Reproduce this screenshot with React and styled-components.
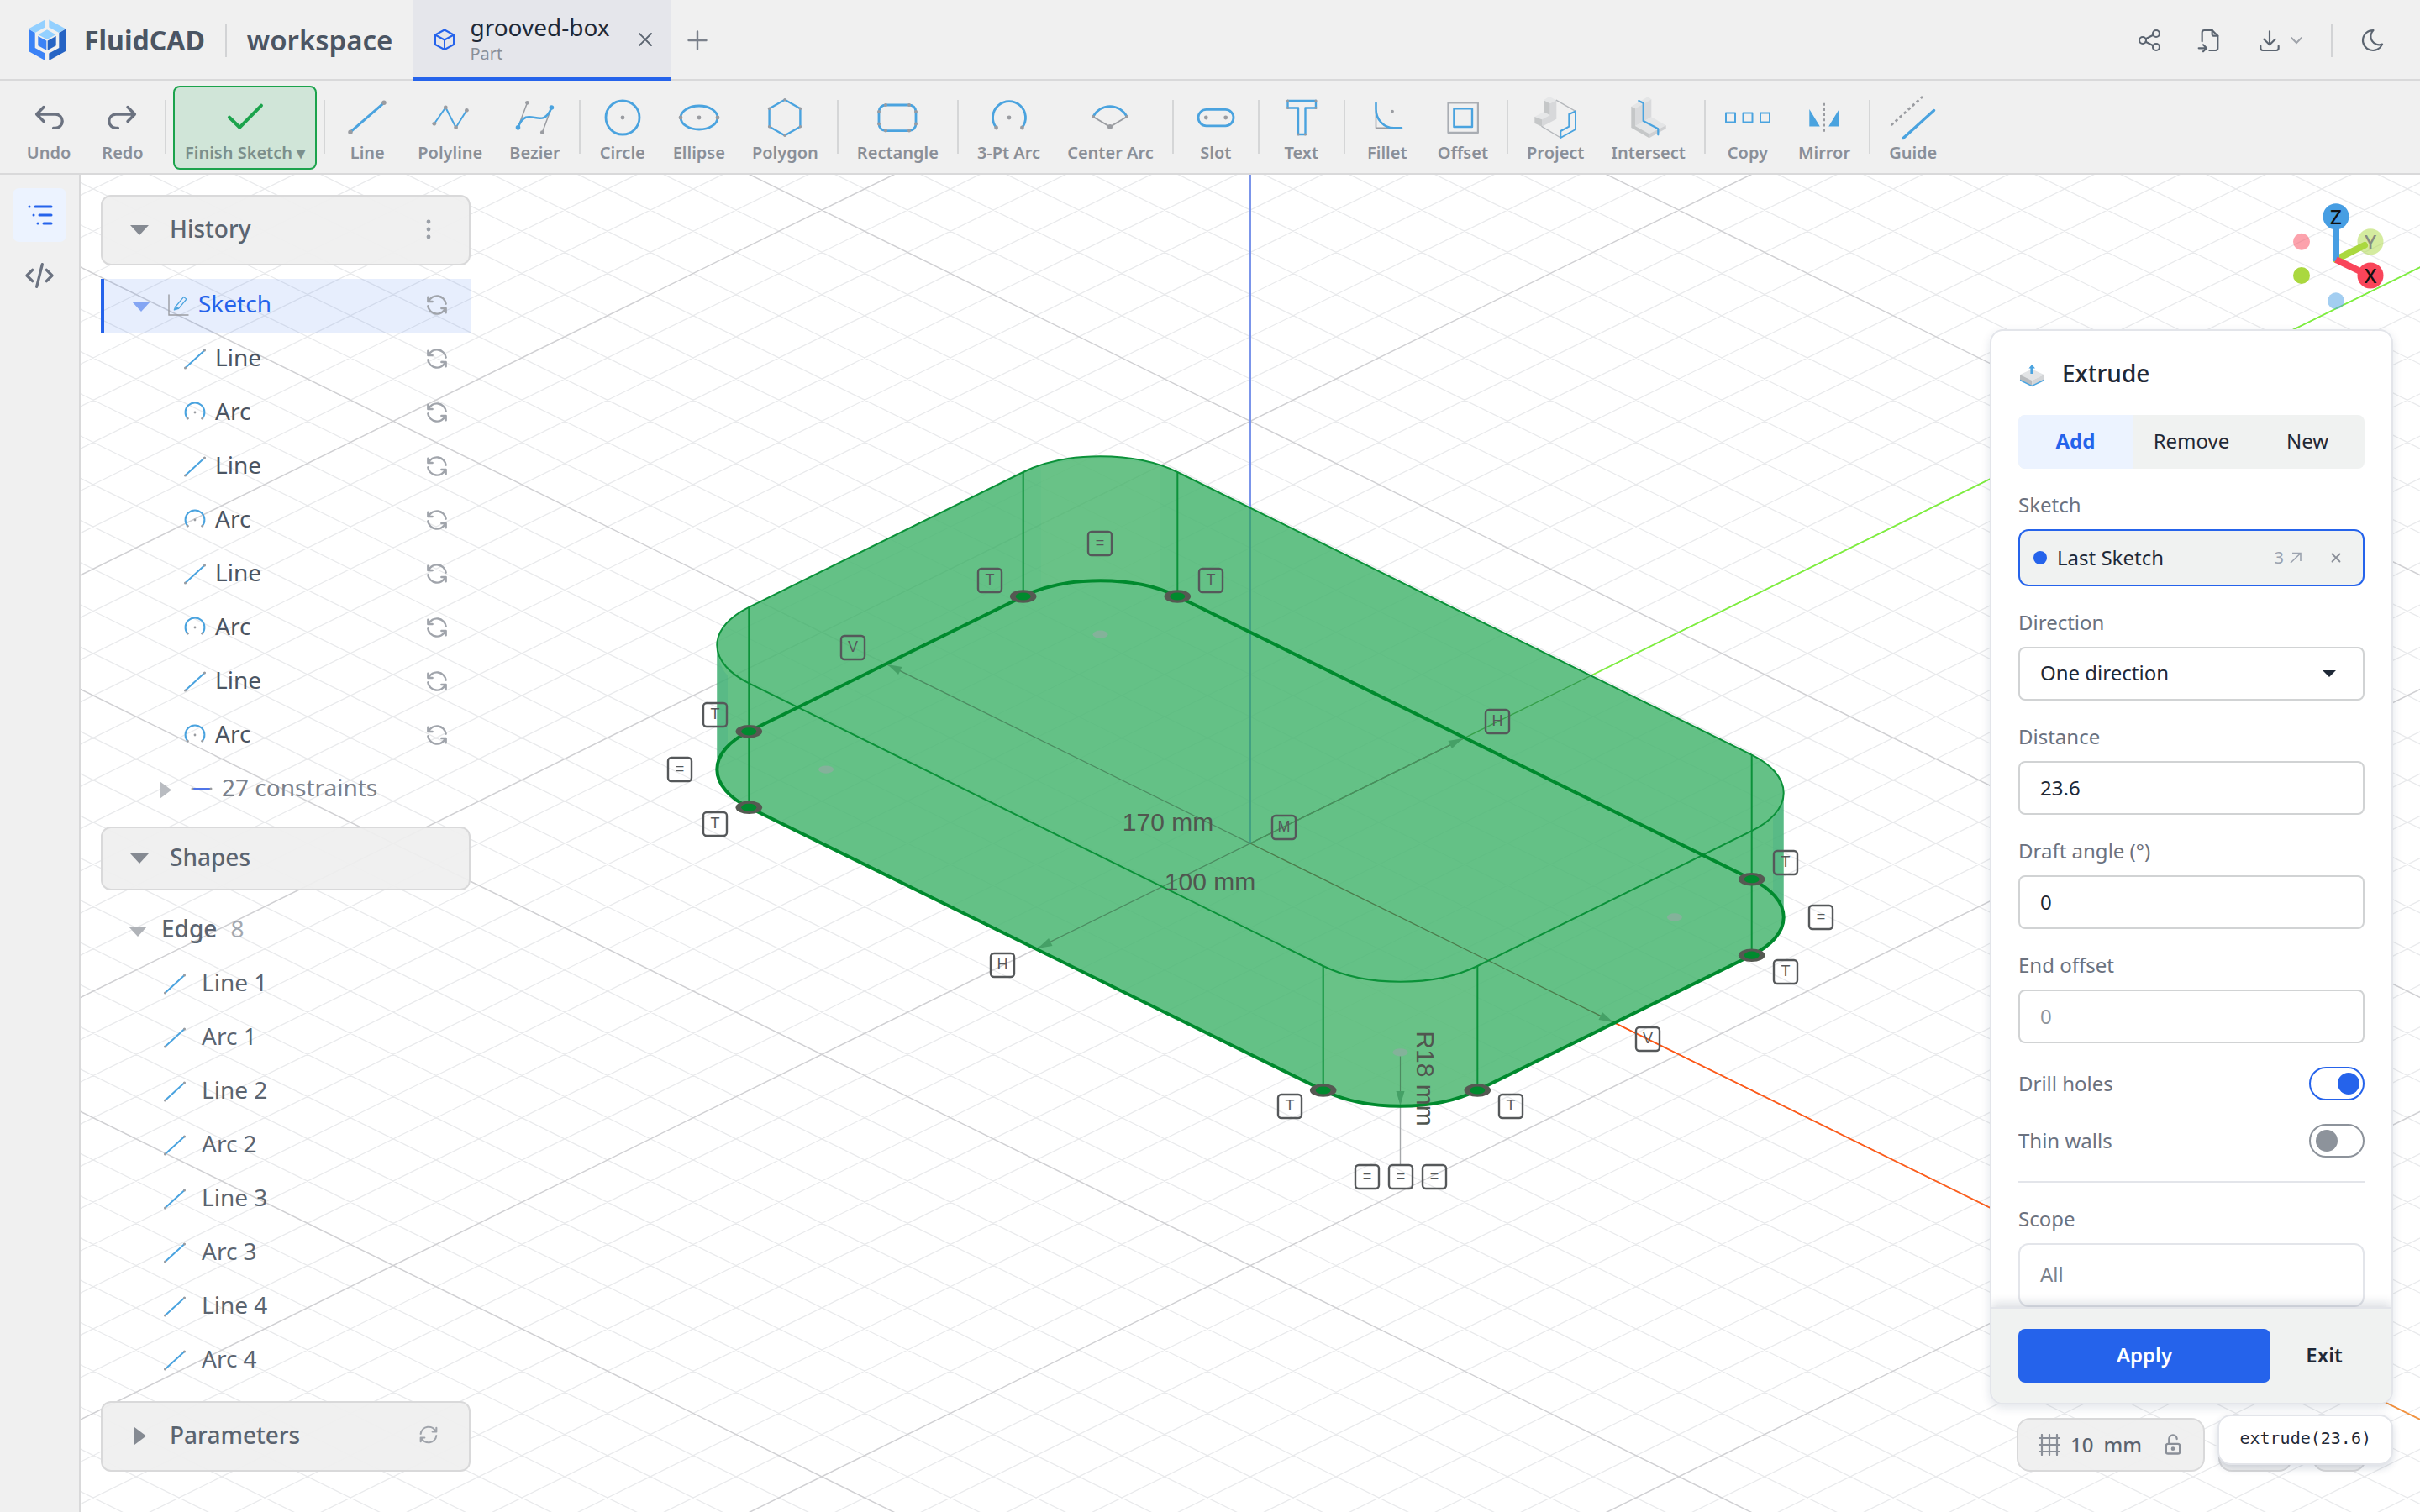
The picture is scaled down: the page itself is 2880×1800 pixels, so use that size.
import React from "react";
import styled, { createGlobalStyle, css } from "styled-components";

const GlobalStyle = createGlobalStyle`
  *, *::before, *::after { box-sizing: border-box; }
  html, body, #root { height: 100%; margin: 0; }
  body { background: #fff; }
  body, button, input, select { font-family: "Noto Sans", sans-serif; }
  button { border: 0; margin: 0; padding: 0; background: none; color: inherit; cursor: pointer; }
  ul { list-style: none; margin: 0; padding: 0; }
  svg { display: block; flex: none; }
`;

const blue = "#2563eb";
const sky = "#4aa3df";
const grey = "#9a9ca1";
const bar = "#f0f0f0";
const line = "#d9d9da";

const Shell = styled.div`
  display: flex;
  flex-direction: column;
  height: 100vh;
  overflow: hidden;
`;

/* ---------- header ---------- */

const Header = styled.header`
  display: flex;
  align-items: center;
  height: 96px;
  flex: none;
  padding: 0 28px 0 32px;
  background: ${bar};
  box-shadow: inset 0 -2px 0 ${line};
`;

const Brand = styled.div`
  display: flex;
  align-items: center;
  gap: 20px;
  color: #4b5563;
  font-size: 32px;
  line-height: 48px;
  font-weight: 700;
`;

const Workspace = styled.div`
  padding-right: 24px;
  color: #4b5563;
  font-size: 33px;
  line-height: 48px;
  font-weight: 600;
`;

const Divider = styled.span`
  width: 2px;
  height: 40px;
  margin: 0 ${(p) => p.$gap}px;
  background: #d2d3d5;
`;

const Tab = styled.div`
  display: flex;
  align-items: center;
  gap: 16px;
  align-self: stretch;
  padding: 0 12px 2px 24px;
  background: #e5e6eb;
  box-shadow: inset 0 -4px 0 ${blue};
`;

const TabText = styled.div`
  display: flex;
  flex-direction: column;
  gap: 2px;
`;

const TabTitle = styled.span`
  color: #1f2937;
  font-size: 28px;
  line-height: 32px;
`;

const TabKind = styled.span`
  color: #8a8f98;
  font-size: 20px;
  line-height: 28px;
`;

const IconButton = styled.button`
  display: flex;
  align-items: center;
  justify-content: center;
  gap: 6px;
  width: ${(p) => p.$w || 56}px;
  height: ${(p) => p.$h || 56}px;
  margin-left: ${(p) => p.$ml || 0}px;
  border-radius: 8px;
  color: ${(p) => p.$color || "#5b6470"};
`;

const HeaderActions = styled.div`
  display: flex;
  align-items: center;
  gap: 16px;
  margin-left: auto;
`;

/* ---------- toolbar ---------- */

const Toolbar = styled.nav`
  display: flex;
  align-items: center;
  gap: 4px;
  flex: none;
  height: 112px;
  padding: 0 16px 2px;
  background: ${bar};
  box-shadow: inset 0 -2px 0 ${line};
`;

const Tool = styled.button`
  display: flex;
  flex-direction: column;
  align-items: center;
  min-width: 84px;
  margin-top: 2px;
  padding: 8px 12px 4px;
  border: 2px solid transparent;
  border-radius: 8px;
  color: #8a8f98;
  font-size: 20px;
  line-height: 28px;
  font-weight: 600;
  white-space: nowrap;
  ${(p) =>
    p.$active &&
    css`
      color: #7b8f8c;
      background: #d0e5d8;
      border-color: #1ba34c;
    `}
`;

const ToolSep = styled.span`
  width: 2px;
  height: 64px;
  margin: 0 4px;
  background: #d5d6d7;
`;

/* ---------- body ---------- */

const Body = styled.div`
  display: flex;
  flex: 1;
  min-height: 0;
`;

const Rail = styled.aside`
  display: flex;
  flex-direction: column;
  align-items: center;
  gap: 8px;
  width: 96px;
  padding-top: 16px;
  background: ${bar};
  border-right: 2px solid ${line};
`;

const RailButton = styled.button`
  display: flex;
  align-items: center;
  justify-content: center;
  width: 64px;
  height: 64px;
  border-radius: 8px;
  color: ${(p) => (p.$active ? blue : "#6b7280")};
  background: ${(p) => (p.$active ? "#ecf3ff" : "transparent")};
`;

const Stage = styled.main`
  position: relative;
  display: flex;
  justify-content: space-between;
  flex: 1;
  min-width: 0;
  padding: 24px 32px 48px 24px;
`;

const Canvas = styled.svg`
  position: absolute;
  inset: 0;
  width: 100%;
  height: 100%;
`;

const Sidebar = styled.section`
  position: relative;
  display: flex;
  flex-direction: column;
  gap: 16px;
  width: 440px;
`;

const Group = styled.div`
  display: flex;
  flex-direction: column;
  gap: 16px;
  margin-bottom: ${(p) => (p.$tight ? -4 : 0)}px;
`;

const GroupHead = styled.div`
  display: flex;
  align-items: center;
  height: ${(p) => (p.$small ? 76 : 84)}px;
  padding: 0 34px 4px 32px;
  border: 2px solid ${line};
  border-radius: 12px;
  background: rgba(239, 239, 239, 0.92);
`;

const GroupToggle = styled.button`
  display: flex;
  align-items: center;
  gap: 24px;
  flex: 1;
  color: #5b6470;
  font-size: 28px;
  line-height: 40px;
  font-weight: 500;

  > svg { color: #858a92; }
`;

const Row = styled.li`
  display: flex;
  align-items: center;
  gap: ${(p) => p.$gap || 8}px;
  height: 64px;
  padding: 0 24px 2px ${(p) => p.$indent}px;
  border-left: 4px solid ${(p) => (p.$active ? blue : "transparent")};
  background: ${(p) => (p.$active ? "rgba(37, 99, 235, 0.11)" : "none")};
  color: ${(p) => (p.$active ? blue : p.$color || "#4b5563")};
  font-size: 28px;
  line-height: 40px;
  font-weight: ${(p) => (p.$strong ? 500 : 400)};
`;

const RowLabel = styled.span`
  flex: 1;
  padding-bottom: 4px;
`;

const Count = styled.span`
  margin-left: 16px;
  color: #a3a8b0;
  font-weight: 400;
`;

const CaretButton = styled.button`
  display: flex;
  margin-right: 8px;
  color: ${(p) => p.$color};
`;

const RefreshButton = styled.button`
  display: flex;
  color: #a0a4ab;
`;

/* ---------- right column ---------- */

const Column = styled.section`
  position: relative;
  display: flex;
  flex-direction: column;
  width: 480px;
`;

const Gizmo = styled.svg`
  align-self: flex-end;
  width: 160px;
  height: 160px;
  font-family: "Noto Sans", sans-serif;
`;

const Panel = styled.form`
  display: flex;
  flex-direction: column;
  flex: 1;
  min-height: 0;
  margin: 0 0 16px;
  overflow: hidden;
  border: 2px solid #e3e5ea;
  border-radius: 16px;
  background: #fff;
  box-shadow: 0 4px 12px rgba(15, 40, 80, 0.12);
`;

const PanelBody = styled.div`
  display: flex;
  flex-direction: column;
  gap: 28px;
  flex: 1;
  min-height: 0;
  overflow: hidden;
  padding: 28px 32px 0;
  color: #1f2937;
  font-size: 24px;
  line-height: 32px;
`;

const PanelTitle = styled.h2`
  display: flex;
  align-items: center;
  gap: 16px;
  flex: none;
  margin: 0;
  font-size: 28px;
  line-height: 44px;
  font-weight: 500;
`;

const Segments = styled.div`
  display: grid;
  grid-template-columns: repeat(3, 1fr);
  gap: 2px;
  flex: none;
  height: 64px;
  overflow: hidden;
  border-radius: 8px;
  background: #f0f2f1;
`;

const Segment = styled.button`
  padding-bottom: 2px;
  color: ${(p) => (p.$active ? blue : "#1f2937")};
  background: ${(p) => (p.$active ? "#ecf3ff" : "none")};
  font-size: 24px;
  line-height: 32px;
  font-weight: ${(p) => (p.$active ? 700 : 400)};
`;

const Field = styled.div`
  display: flex;
  flex-direction: column;
  gap: 13px;
  flex: none;
`;

const Label = styled.label`
  margin-top: -1px;
  color: #6b7280;
`;

const box = css`
  width: 100%;
  height: 64px;
  padding: 0 24px 2px;
  border: 2px solid #d1d3d4;
  border-radius: 8px;
  background: #fff;
  color: #1f2937;
  font-size: 24px;
  line-height: 32px;
  outline: none;
`;

const TextInput = styled.input`
  ${box}
  &::placeholder { color: #8f959e; }
`;

const SelectWrap = styled.div`
  display: grid;
  align-items: center;
  > * { grid-area: 1 / 1; }
  > svg { justify-self: end; margin-right: 34px; pointer-events: none; }
`;

const Select = styled.select`
  ${box}
  appearance: none;
`;

const Chip = styled.div`
  display: flex;
  align-items: center;
  height: 68px;
  padding: 0 16px;
  border: 2px solid ${blue};
  border-radius: 12px;
  background: #f0f2f1;
`;

const ChipDot = styled.span`
  width: 16px;
  height: 16px;
  margin-right: 12px;
  border-radius: 50%;
  background: ${blue};
`;

const ChipRef = styled.button`
  display: flex;
  align-items: center;
  gap: 6px;
  margin-left: auto;
  color: #9ca3af;
  font-size: 20px;
  line-height: 28px;
`;

const ToggleRow = styled.div`
  display: flex;
  align-items: center;
  justify-content: space-between;
  flex: none;
  height: 40px;
`;

const Switch = styled.input`
  appearance: none;
  display: flex;
  align-items: center;
  width: 66px;
  height: 40px;
  margin: 0;
  padding: 0 4px 0 6px;
  border: 2px solid #8d939b;
  border-radius: 20px;
  background: #fff;
  &::before {
    content: "";
    width: 26px;
    height: 26px;
    border-radius: 50%;
    background: #8d939b;
  }
  &:checked { justify-content: flex-end; border-color: ${blue}; }
  &:checked::before { background: ${blue}; }
`;

const Rule = styled.hr`
  flex: none;
  width: 100%;
  height: 2px;
  margin: 0;
  border: 0;
  background: #e3e5ea;
`;

const ScopeButton = styled.button`
  ${box}
  height: 76px;
  border-color: #e3e5ea;
  border-radius: 12px;
  color: #7b818b;
  text-align: left;
`;

const PanelFooter = styled.div`
  display: flex;
  gap: 16px;
  flex: none;
  padding: 24px 32px;
  border-top: 2px solid #e3e5ea;
  background: #f0f2f1;
  box-shadow: 0 -4px 12px rgba(15, 30, 60, 0.16);
`;

const Action = styled.button`
  flex: ${(p) => (p.$primary ? "1" : "0 0 96px")};
  height: 64px;
  padding-bottom: 2px;
  border-radius: 8px;
  background: ${(p) => (p.$primary ? blue : "none")};
  color: ${(p) => (p.$primary ? "#fff" : "#1f2937")};
  font-size: 24px;
  line-height: 32px;
  font-weight: 600;
`;

const Dock = styled.div`
  position: relative;
  display: flex;
  gap: 16px;
  flex: none;
  padding: 0 32px;
`;

const DockItem = styled.button`
  display: flex;
  align-items: center;
  gap: 12px;
  flex: ${(p) => (p.$w ? `0 0 ${p.$w}px` : "1")};
  height: 64px;
  margin-left: ${(p) => (p.$last ? 8 : 0)}px;
  padding: 0 22px 0 24px;
  border: 2px solid ${line};
  border-radius: 16px;
  background: rgba(239, 239, 239, 0.92);
  color: #5b6470;
  font-size: 24px;
  line-height: 32px;
  font-weight: 500;
`;

const DockEnd = styled.span`
  display: flex;
  margin-left: auto;
  color: #8a8f98;
`;

const Popover = styled.output`
  position: absolute;
  top: -4px;
  right: 0;
  padding: 12px 24px 16px;
  border: 2px solid #e3e5ea;
  border-radius: 16px;
  background: #fff;
  box-shadow: 0 4px 10px rgba(15, 40, 80, 0.16);
  color: #1f2937;
  font-family: "DejaVu Sans Mono", monospace;
  font-size: 20px;
  line-height: 28px;
`;

/* ---------- outline icons ---------- */

function Outline({ size, weight = 1.6, flip, children }) {
  return (
    <svg width={size} height={size} viewBox="0 0 24 24" fill="none" stroke="currentColor" strokeWidth={weight} strokeLinecap="round" strokeLinejoin="round" aria-hidden="true">
      <g transform={flip ? "matrix(-1 0 0 1 24 0)" : undefined}>{children}</g>
    </svg>
  );
}

const Refresh = ({ size = 32, flip }) => (
  <Outline size={size} flip={flip} weight={1.8}>
    <path d="M20 11a8.1 8.1 0 0 0 -15.5 -2m-.5 -4v4h4" />
    <path d="M4 13a8.1 8.1 0 0 0 15.5 2m.5 4v-4h-4" />
  </Outline>
);

const Cross = ({ size, weight }) => (
  <Outline size={size} weight={weight}>
    <path d="M18 6l-12 12M6 6l12 12" />
  </Outline>
);

const Caret = ({ open }) => (
  <svg width="24" height="24" viewBox="0 0 24 24" fill="currentColor" aria-hidden="true">
    <path d={open ? "M1 8H23L12 20Z" : "M6 3V24L20 13.5Z"} />
  </svg>
);

const Logo = () => (
  <svg width="48" height="52" viewBox="0 0 48 52" aria-hidden="true">
    <path fill="#93d0ff" d="M21.7 1.5V10.5L9.7 17L2 12.3ZM26.3 1.5V10.5L38.3 17L46 12.3ZM24 13.3L34.5 19.2L24 25L13.5 19.2Z" />
    <path fill="#3b82f6" d="M2 12.6L9.7 17.3V35L21.7 41.6V50L2 39Z" />
    <path fill="#2563c4" d="M46 12.6L38.3 17.3V35L26.3 41.6V50L46 39Z" />
    <path fill="#3b82f6" d="M13.3 21L23.3 26.6V37.8L13.3 32.3Z" />
    <path fill="#2563c4" d="M34.7 21L24.7 26.6V37.8L34.7 32.3Z" />
  </svg>
);

/* ---------- toolbar glyphs, on a 56 unit square ---------- */

const Dots = ({ at, r = 2.4, fill = grey }) => at.map(([x, y]) => <circle key={`${x},${y}`} cx={x} cy={y} r={r} fill={fill} stroke="none" />);

const glyphs = {
  undo: (
    <g stroke="#6b7280" strokeWidth="3.4">
      <path d="M22 15.5L13.6 24L22 32.5M14 24H36a8.2 8.2 0 0 1 0 16.4H33.6" />
    </g>
  ),
  redo: (
    <g stroke="#6b7280" strokeWidth="3.4">
      <path d="M34 15.5L42.4 24L34 32.5M42 24H20a8.2 8.2 0 0 0 0 16.4H22.4" />
    </g>
  ),
  check: <path stroke="#1ba34c" strokeWidth="4" d="M9 27.7L21.3 39.7L47 13.7" />,
  line: (
    <>
      <path strokeWidth="3" d="M8 45.2L48 10.3" />
      <Dots at={[[8, 45.2], [48, 10.3]]} r={2.7} />
    </>
  ),
  polyline: (
    <>
      <path strokeWidth="2" d="M8.8 35.3L22.3 16L34.6 39.7L47.4 19.3" />
      <Dots at={[[8.8, 35.3], [22.3, 16], [34.6, 39.7], [47.4, 19.3]]} />
    </>
  ),
  bezier: (
    <>
      <path stroke={grey} strokeWidth="1.5" d="M7.5 39.7L18.5 10.3M47.4 16L36.3 45.7" />
      <path strokeWidth="2.6" d="M7.5 39.7C18.5 10.3 36.3 45.7 47.4 16" />
      <Dots at={[[18.5, 10.3], [36.3, 45.7]]} />
      <Dots at={[[7.5, 39.7], [47.4, 16]]} fill={sky} r={2.8} />
    </>
  ),
  circle: (
    <>
      <circle cx="28" cy="28" r="20" strokeWidth="2.8" />
      <Dots at={[[28, 28]]} />
    </>
  ),
  ellipse: (
    <>
      <ellipse cx="28" cy="28" rx="22" ry="14" strokeWidth="2.8" />
      <Dots at={[[28, 28], [6, 28], [50, 28]]} />
    </>
  ),
  polygon: (
    <>
      <path strokeWidth="2.4" d="M28 6.8L46.4 17.2V38.8L28 49.2L9.6 38.8V17.2Z" />
      <Dots at={[[28, 6.8], [46.4, 17.2], [46.4, 38.8], [28, 49.2], [9.6, 38.8], [9.6, 17.2]]} r={1.7} />
    </>
  ),
  rectangle: (
    <>
      <rect x="6" y="13" width="44" height="30.6" rx="8" strokeWidth="2.8" />
      <Dots r={2} at={[[14, 13], [42, 13], [6, 21], [50, 21], [6, 35.6], [50, 35.6], [14, 43.6], [42, 43.6]]} />
    </>
  ),
  arc: (
    <>
      <path strokeWidth="2.8" d="M12.6 40A19.5 19.5 0 1 1 43.4 40" />
      <Dots at={[[28, 28], [12.6, 40], [43.4, 40]]} />
    </>
  ),
  centerArc: (
    <>
      <path stroke={grey} strokeWidth="2" d="M8 27L28 39L48 27" />
      <path strokeWidth="2.8" d="M8 27A22.3 22.3 0 0 1 48 27" />
      <Dots at={[[8, 27], [48, 27]]} r={2} />
      <Dots at={[[28, 39]]} r={3} />
    </>
  ),
  slot: (
    <>
      <rect x="7" y="18.4" width="42" height="19.4" rx="9.7" strokeWidth="2.8" />
      <Dots at={[[16.3, 28], [39.7, 28]]} />
    </>
  ),
  text: (
    <>
      <path strokeWidth="2.4" d="M11.5 8H45V16.5H32.5V48H24V16.5H11.5Z" />
      <Dots r={1.6} at={[[11.5, 8], [45, 8], [45, 16.5], [11.5, 16.5], [24, 48], [32.5, 48]]} />
    </>
  ),
  fillet: (
    <>
      <path stroke={grey} strokeWidth="1.6" d="M14.5 20V40.3H34" />
      <path strokeWidth="2.6" d="M14.5 10.5V18C14.5 30.5 24 40.3 36 40.3H45" />
      <Dots at={[[34, 20.6]]} r={1.9} />
    </>
  ),
  offset: (
    <>
      <rect x="10.5" y="10.5" width="35.4" height="35.4" stroke="#a9adb3" strokeWidth="2.2" />
      <rect x="17.4" y="17.4" width="21.6" height="21.6" strokeWidth="2.4" />
    </>
  ),
  project: (
    <>
      <g stroke="none">
        <path fill="#e6e7e8" d="M14 7.3L20.7 3L29.3 7.3L21.7 11.3ZM3.3 27L14 21.3L21.7 25L12 30.3Z" />
        <path fill="#c5c7c8" d="M14 7.3L21.7 11.3V25L14 21.3ZM3.3 27L12 30.3V38.7L3.3 34.7Z" />
        <path fill="#d7d8da" d="M21.7 11.3L29.3 7.3V29.7L12 38.7V30.3L21.7 25Z" />
      </g>
      <path stroke="#b5b8bc" strokeWidth="1.4" d="M29.3 7.3L52 20.3M12 38.7L34.3 52" />
      <path strokeWidth="2" d="M52 20.3V42L34.3 52V44L44.3 38.7V24Z" />
    </>
  ),
  intersect: (
    <>
      <g stroke="none">
        <path fill="#e4e5e6" d="M7.3 14.7L27 3.3L31.3 6.3L12 17.3ZM12 38L31.3 27.3L48.7 37.3L28.7 47.3Z" />
        <path fill="#c5c7c8" d="M7.3 14.7L12 17.3V38L28.7 47.3V52.3L7.3 40Z" />
        <path fill="#d9dadc" d="M12 17.3L31.3 6.3V27.3L12 38Z" />
        <path fill="#cfd0d2" d="M28.7 47.3L48.7 37.3V41L28.7 52.3Z" />
      </g>
      <path strokeWidth="2.2" d="M16.3 8L21.7 10.7V32L39.3 41.3V48.3" />
    </>
  ),
  copy: (
    <g strokeWidth="2">
      <rect x="2" y="22.5" width="11" height="11" />
      <rect x="22.5" y="22.5" width="11" height="11" />
      <rect x="43" y="22.5" width="11" height="11" />
    </g>
  ),
  mirror: (
    <>
      <path fill={sky} stroke="none" d="M10.3 18V38.5H22.8ZM45.7 18V38.5H33.2Z" />
      <path stroke={grey} strokeWidth="2" strokeLinecap="butt" strokeDasharray="3 3.2" d="M28 10.7V45.7" />
    </>
  ),
  guide: (
    <>
      <path stroke={grey} strokeWidth="2.8" strokeLinecap="butt" strokeDasharray="3.4 3.4" d="M1.7 37L39 3" />
      <path strokeWidth="3.4" d="M16 52.5L52.5 19.5" />
    </>
  ),
};

const Glyph = ({ name, size = 56 }) => (
  <svg width={size} height={size} viewBox="0 0 56 56" fill="none" stroke={sky} strokeLinecap="round" strokeLinejoin="round" aria-hidden="true">
    {glyphs[name]}
  </svg>
);

const toolGroups = [
  [["undo", "Undo"], ["redo", "Redo"]],
  [["check", "Finish Sketch ▾"]],
  [["line", "Line"], ["polyline", "Polyline"], ["bezier", "Bezier"]],
  [["circle", "Circle"], ["ellipse", "Ellipse"], ["polygon", "Polygon"]],
  [["rectangle", "Rectangle"]],
  [["arc", "3-Pt Arc"], ["centerArc", "Center Arc"]],
  [["slot", "Slot"]],
  [["text", "Text"]],
  [["fillet", "Fillet"], ["offset", "Offset"]],
  [["project", "Project"], ["intersect", "Intersect"]],
  [["copy", "Copy"], ["mirror", "Mirror"]],
  [["guide", "Guide"]],
];

/* ---------- small tree icons, on a 32 unit square ---------- */

const TreeIcon = ({ kind }) => (
  <svg width="32" height="32" viewBox="0 0 32 32" fill="none" stroke={sky} strokeWidth="2" strokeLinecap="round" aria-hidden="true">
    {kind === "line" && (
      <>
        <path d="M4.5 27L27.5 6" />
        <Dots at={[[4.5, 27], [27.5, 6]]} r={1.5} />
      </>
    )}
    {kind === "arc" && (
      <>
        <path d="M7.3 23.2A11.4 11.4 0 1 1 24.7 23.2" />
        <Dots at={[[16, 16], [7.3, 23.2], [24.7, 23.2]]} r={1.4} />
      </>
    )}
    {kind === "constraint" && (
      <>
        <path stroke="#4f74e8" d="M5 16H27" />
        <Dots at={[[5, 16], [27, 16]]} r={1.5} />
      </>
    )}
    {kind === "sketch" && (
      <>
        <path stroke={grey} strokeWidth="1.4" d="M5 4V28H28" />
        <path strokeWidth="1.2" d="M13 18L22.5 6.5L26 9L16.5 20.5Z" />
        <path fill={sky} strokeWidth="1" d="M13 18L16.5 20.5L11.5 22Z" />
      </>
    )}
  </svg>
);

/* ---------- 3D scene ---------- */

// Screen position of a point in millimetres, relative to the origin.
const U = 5.1;
const V = 2.513;
const RISE = 148;
const pt = (x, y, z = 0) => [U * (x + y), V * (x - y) - z];
const str = (p) => `${p[0].toFixed(1)} ${p[1].toFixed(1)}`;
const RX = 18 * U * Math.SQRT2;
const RY = 18 * V * Math.SQRT2;
const arcTo = (p) => `A${RX.toFixed(1)} ${RY.toFixed(1)} 0 0 1 ${str(p)}`;

const outline = (z) =>
  `M${str(pt(-85, 32, z))}${arcTo(pt(-67, 50, z))}L${str(pt(67, 50, z))}${arcTo(pt(85, 32, z))}` +
  `L${str(pt(85, -32, z))}${arcTo(pt(67, -50, z))}L${str(pt(-67, -50, z))}${arcTo(pt(-85, -32, z))}Z`;

const [cx, cy] = pt(67, 32);
const tip = cx + RX;
const silhouette =
  `M${-tip} ${-cy - RISE}${arcTo(pt(-85, -32, RISE))}L${str(pt(-85, 32, RISE))}${arcTo(pt(-67, 50, RISE))}` +
  `L${str(pt(67, 50, RISE))}${arcTo([tip, cy - RISE])}V${cy}${arcTo(pt(85, 32))}` +
  `L${str(pt(85, -32))}${arcTo(pt(67, -50))}L${str(pt(-67, -50))}${arcTo([-tip, -cy])}Z`;

const SPAN = 600;
const gridPath = (keep) => {
  let d = "";
  for (let k = -SPAN; k <= SPAN; k += 10) {
    if (keep(k)) d += `M${str(pt(k, -SPAN))}L${str(pt(k, SPAN))}M${str(pt(-SPAN, k))}L${str(pt(SPAN, k))}`;
  }
  return d;
};
const minorGrid = gridPath((k) => k % 100 !== 0);
const majorGrid = gridPath((k) => k % 100 === 0);

const corners = [[-85, 32], [-67, 50], [67, 50], [85, 32], [85, -32], [67, -50], [-67, -50], [-85, -32]];
const centers = [[-67, 32], [67, 32], [67, -32], [-67, -32]];
const posts = [
  `M-596.7 ${-133 - RISE}V-42.7`,
  `M596.7 ${42.7 - RISE}V133`,
  `M-270.3 ${-294 - RISE}V-294`,
  `M-86.7 ${-294 - RISE}V-294`,
  `M86.7 ${294 - RISE}V294`,
  `M270.3 ${294 - RISE}V294`,
].join("");

const badges = [
  ["=", -179, -357], ["T", -310, -313], ["T", -47, -313], ["V", -473, -233],
  ["T", -637, -153], ["=", -679, -88], ["T", -637, -23], ["M", 40, -19],
  ["H", 294, -145], ["H", -295, 145], ["T", 637, 23], ["=", 679, 88],
  ["T", 637, 153], ["V", 473, 233], ["T", 47, 313], ["T", 310, 313],
  ["=", 139, 397], ["=", 179, 397], ["=", 219, 397],
];

const ArrowHead = ({ x, y, angle }) => (
  <path d="M0 0L-17 -5V5Z" fill="#45a066" transform={`translate(${x} ${y}) rotate(${angle})`} />
);

function Scene() {
  return (
    <Canvas viewBox="-1392 -796 2784 1592" preserveAspectRatio="xMidYMid slice" fill="none" fontFamily='"Liberation Sans", Arial, sans-serif' role="img" aria-label="Extrusion preview of the rounded box">
      <defs>
        <linearGradient id="xAxis" gradientUnits="userSpaceOnUse" x1="433" y1="213" x2="1392" y2="686">
          <stop offset="0" stopColor="#ff5514" />
          <stop offset="0.5" stopColor="#ff5f1c" />
          <stop offset="1" stopColor="#f4933c" />
        </linearGradient>
      </defs>
      <path d={minorGrid} stroke="#e9eaec" strokeWidth="1.3" />
      <path d={majorGrid} stroke="#d0d0d3" strokeWidth="1.5" />

      <path d="M0 -796V-399" stroke="#7b95ea" strokeWidth="2" />
      <path d="M404 -199L1640 -808" stroke="#7df03c" strokeWidth="1.8" />
      <path d="M433 213.4L1640 808" stroke="url(#xAxis)" strokeWidth="1.8" />

      <path d={silhouette} fill="#4bb772" fillOpacity="0.86" />
      <g fill="#8fd08c" fillOpacity="0.14">
        <path d={`M-249 ${-300 - RISE}${arcTo([-108, -300 - RISE])}V-302${"A129.8 64 0 0 0 -249 -302Z"}`} />
        <path d={`M86.7 ${294 - RISE}A129.8 64 0 0 0 270.3 ${294 - RISE}V294${arcTo([86.7, 294])}Z`} />
      </g>
      <g fill="#3aa888" fillOpacity="0.26">
        <path d={`M${-tip} ${-cy - RISE}Q-633 -210 -622 -200V-113Q-633 -103 ${-tip} ${-cy}Z`} />
        <path d={`M${tip} ${cy - RISE}Q633 -40 622 -30V60Q633 70 ${tip} ${cy}Z`} />
      </g>

      <path d="M0 -399V0" stroke="#3f9d82" strokeWidth="1.8" />
      <path d="M0 0L404 -199" stroke="#35a048" strokeWidth="1.3" />

      <g stroke="#4c8a60" strokeWidth="1.2">
        <path d="M-433 -213.4L0 0" />
        <path d="M0 0L433 213.4" stroke="#4c7a4a" />
        <path d="M-255 125.6L255 -125.6" />
        <path d="M178.5 249V313" />
      </g>
      <path d="M178.5 313V382" stroke="#a5a7aa" strokeWidth="1.4" />
      <ArrowHead x={-432} y={-213} angle={206} />
      <ArrowHead x={432} y={213} angle={26} />
      <ArrowHead x={253} y={-125} angle={-26} />
      <ArrowHead x={-253} y={125} angle={154} />
      <ArrowHead x={178.5} y={312} angle={90} />

      <path d={outline(RISE)} stroke="#0b9139" strokeWidth="2" />
      <path d={posts} stroke="#0b9139" strokeWidth="2" />
      <path d={outline(0)} stroke="#008a2e" strokeWidth="4" />

      {centers.map(([x, y]) => {
        const [a, b] = pt(x, y);
        return <ellipse key={`${x},${y}`} cx={a} cy={b} rx="9" ry="4.6" fill="#84b29a" />;
      })}
      {corners.map(([x, y]) => {
        const [a, b] = pt(x, y);
        return (
          <g key={`${x},${y}`}>
            <ellipse cx={a} cy={b} rx="15.8" ry="7.8" fill="#555952" />
            <ellipse cx={a} cy={b} rx="9" ry="4.6" fill="#008a2e" />
          </g>
        );
      })}

      <g fill="#50564f" fontSize="30" textAnchor="middle">
        <text x="-98" y="-15">170 mm</text>
        <text x="-48" y="56">100 mm</text>
        <text transform="translate(198 280) rotate(90)">R18 mm</text>
      </g>
      <g fontSize="18" textAnchor="middle">
        {badges.map(([mark, x, y]) => (
          <g key={`${x},${y}`} transform={`translate(${x} ${y})`}>
            <rect x="-14" y="-14" width="28" height="28" rx="4" stroke="#55585a" strokeWidth="2.4" />
            <text y="5" fill="#55585a">{mark}</text>
          </g>
        ))}
      </g>
    </Canvas>
  );
}

function AxisGizmo() {
  return (
    <Gizmo viewBox="0 0 160 160" fontSize="24" fontWeight="500" textAnchor="middle" strokeWidth="8" role="img" aria-label="View orientation">
      <circle cx="92" cy="126.3" r="10" fill="#479ee3" fillOpacity="0.5" />
      <circle cx="51" cy="55.7" r="10" fill="#f9455a" fillOpacity="0.5" />
      <circle cx="51" cy="96" r="10" fill="#aad83f" />
      <circle cx="133" cy="55.7" r="15.5" fill="#aad83f" fillOpacity="0.5" />
      <path d="M92 77L126 60" stroke="#aad83f" strokeLinecap="round" />
      <path d="M92 79V38" stroke="#479ee3" />
      <path d="M92 77L126 93.5" stroke="#f9455a" />
      <circle cx="92" cy="25.7" r="15.5" fill="#479ee3" />
      <circle cx="133" cy="96" r="15.5" fill="#f9455a" />
      <text x="92" y="35" fill="#111">Z</text>
      <text x="133" y="65" fill="#868b80">Y</text>
      <text x="133" y="105" fill="#111">X</text>
    </Gizmo>
  );
}

/* ---------- page parts ---------- */

function TopBar() {
  return (
    <Header>
      <Brand><Logo />FluidCAD</Brand>
      <Divider $gap={24} />
      <Workspace>workspace</Workspace>
      <Tab>
        <svg width="28" height="28" viewBox="0 0 28 28" fill="none" stroke={blue} strokeWidth="2" strokeLinejoin="round" aria-hidden="true">
          <path d="M14 2.5L25 8.5V20L14 26L3 20V8.5ZM3 8.5L14 14.5L25 8.5M14 14.5V26" />
        </svg>
        <TabText>
          <TabTitle>grooved-box</TabTitle>
          <TabKind>Part</TabKind>
        </TabText>
        <IconButton $w={36} $h={36} $ml={8} aria-label="Close tab"><Cross size={28} /></IconButton>
      </Tab>
      <IconButton $w={44} $h={44} $ml={10} $color="#7b818b" aria-label="New tab">
        <Outline size={36}><path d="M12 5v14M5 12h14" /></Outline>
      </IconButton>
      <HeaderActions>
        <IconButton aria-label="Share">
          <Outline size={32}>
            <circle cx="6" cy="12" r="3" /><circle cx="18" cy="6" r="3" /><circle cx="18" cy="18" r="3" />
            <path d="M8.7 10.7l6.6 -3.4M8.7 13.3l6.6 3.4" />
          </Outline>
        </IconButton>
        <IconButton aria-label="Import file">
          <Outline size={32}>
            <path d="M14 3v4a1 1 0 0 0 1 1h4" />
            <path d="M5 13v-8a2 2 0 0 1 2 -2h7l5 5v11a2 2 0 0 1 -2 2h-5.500m-9.500 -2h7m-3 -3l3 3l-3 3" />
          </Outline>
        </IconButton>
        <IconButton $w={80} aria-label="Download">
          <Outline size={32}><path d="M4 17v2a2 2 0 0 0 2 2h12a2 2 0 0 0 2 -2v-2M7 11l5 5l5 -5M12 4v12" /></Outline>
          <svg width="20" height="20" viewBox="0 0 20 20" fill="none" stroke="#a0a4ab" strokeWidth="2" strokeLinecap="round" aria-hidden="true"><path d="M4 7L10 13L16 7" /></svg>
        </IconButton>
        <Divider $gap={4} />
        <IconButton aria-label="Dark mode">
          <Outline size={32}><path d="M12 3c.132 0 .263 0 .393 0a7.500 7.500 0 0 0 7.920 12.446a9 9 0 1 1 -8.313 -12.454z" /></Outline>
        </IconButton>
      </HeaderActions>
    </Header>
  );
}

function ToolStrip() {
  return (
    <Toolbar aria-label="Sketch tools">
      {toolGroups.map((group, i) => (
        <React.Fragment key={group[0][0]}>
          {i > 0 && <ToolSep />}
          {group.map(([name, label]) => (
            <Tool key={name} $active={name === "check"}>
              <Glyph name={name} />
              {label}
            </Tool>
          ))}
        </React.Fragment>
      ))}
    </Toolbar>
  );
}

const historyItems = ["Line", "Arc", "Line", "Arc", "Line", "Arc", "Line", "Arc"];
const edges = ["Line 1", "Arc 1", "Line 2", "Arc 2", "Line 3", "Arc 3", "Line 4", "Arc 4"];

function ModelTree() {
  return (
    <Sidebar>
      <Group $tight>
        <GroupHead>
          <GroupToggle aria-expanded="true"><Caret open />History</GroupToggle>
          <IconButton $w={28} $h={40} $color="#9a9fa7" aria-label="History menu">
            <svg width="28" height="28" viewBox="0 0 28 28" fill="currentColor" aria-hidden="true">
              <circle cx="14" cy="6" r="2.4" /><circle cx="14" cy="15" r="2.4" /><circle cx="14" cy="24" r="2.4" />
            </svg>
          </IconButton>
        </GroupHead>
        <ul>
          <Row $active $indent={32}>
            <CaretButton $color="#84a5f3" aria-label="Collapse sketch"><Caret open /></CaretButton>
            <TreeIcon kind="sketch" />
            <RowLabel>Sketch</RowLabel>
            <RefreshButton aria-label="Rebuild Sketch"><Refresh /></RefreshButton>
          </Row>
          {historyItems.map((name, i) => (
            <Row key={i} $indent={92}>
              <TreeIcon kind={name.toLowerCase()} />
              <RowLabel>{name}</RowLabel>
              <RefreshButton aria-label={`Rebuild ${name}`}><Refresh /></RefreshButton>
            </Row>
          ))}
          <Row $indent={60} $color="#7b818b">
            <CaretButton $color="#b9bcc1" aria-label="Expand constraints"><Caret /></CaretButton>
            <TreeIcon kind="constraint" />
            <RowLabel>27 constraints</RowLabel>
          </Row>
        </ul>
      </Group>
      <Group>
        <GroupHead $small>
          <GroupToggle aria-expanded="true"><Caret open />Shapes</GroupToggle>
        </GroupHead>
        <ul>
          <Row $strong $indent={28} $color="#5b6470">
            <CaretButton $color="#b0b3b8" aria-label="Collapse edges"><Caret open /></CaretButton>
            <RowLabel>Edge<Count>8</Count></RowLabel>
          </Row>
          {edges.map((name) => (
            <Row key={name} $indent={68} $gap={16} $color="#5b6470">
              <TreeIcon kind="line" />
              <RowLabel>{name}</RowLabel>
            </Row>
          ))}
        </ul>
      </Group>
      <GroupHead>
        <GroupToggle aria-expanded="false"><Caret />Parameters</GroupToggle>
        <RefreshButton aria-label="Reset parameters"><Refresh size={28} flip /></RefreshButton>
      </GroupHead>
    </Sidebar>
  );
}

function ExtrudePanel() {
  return (
    <Panel onSubmit={(e) => e.preventDefault()}>
      <PanelBody>
        <PanelTitle>
          <svg width="36" height="36" viewBox="0 0 36 36" aria-hidden="true">
            <path fill="#e2e4e6" d="M2 20L16.200 13.500L30.400 20L16.200 27Z" />
            <path fill="#b9bcbf" d="M2 20L16.200 27V33L2 26Z" />
            <path fill="#d3d5d7" d="M30.400 20L16.200 27V33L30.400 26Z" />
            <path fill="none" stroke={sky} strokeWidth="1.400" d="M2 26.500L16.200 33.500L30.400 26.500" />
            <path fill={sky} d="M16.200 8L20 12.500H18V19H14.400V12.500H12.400Z" />
          </svg>
          Extrude
        </PanelTitle>
        <Segments>
          <Segment type="button" $active>Add</Segment>
          <Segment type="button">Remove</Segment>
          <Segment type="button">New</Segment>
        </Segments>
        <Field>
          <Label as="span">Sketch</Label>
          <Chip>
            <ChipDot />
            Last Sketch
            <ChipRef type="button">
              3
              <svg width="16" height="16" viewBox="0 0 16 16" fill="none" stroke="currentColor" strokeWidth="1.600" aria-hidden="true"><path d="M2 14L14 2.500M4 2.500H14V12" /></svg>
            </ChipRef>
            <IconButton type="button" $w={32} $h={32} $ml={24} $color="#8a8f98" aria-label="Clear sketch"><Cross size={18} weight={2.4} /></IconButton>
          </Chip>
        </Field>
        <Field>
          <Label htmlFor="direction">Direction</Label>
          <SelectWrap>
            <Select id="direction" defaultValue="one">
              <option value="one">One direction</option>
            </Select>
            <svg width="16" height="8" viewBox="0 0 16 8" aria-hidden="true"><path d="M0 0H16L8 8Z" fill="#1f2937" /></svg>
          </SelectWrap>
        </Field>
        <Field>
          <Label htmlFor="distance">Distance</Label>
          <TextInput id="distance" defaultValue="23.6" />
        </Field>
        <Field>
          <Label htmlFor="draft">Draft angle (°)</Label>
          <TextInput id="draft" defaultValue="0" />
        </Field>
        <Field>
          <Label htmlFor="end-offset">End offset</Label>
          <TextInput id="end-offset" placeholder="0" />
        </Field>
        <ToggleRow>
          <Label htmlFor="drill">Drill holes</Label>
          <Switch id="drill" type="checkbox" defaultChecked />
        </ToggleRow>
        <ToggleRow>
          <Label htmlFor="thin">Thin walls</Label>
          <Switch id="thin" type="checkbox" />
        </ToggleRow>
        <Rule />
        <Field>
          <Label htmlFor="scope">Scope</Label>
          <ScopeButton id="scope" type="button">All</ScopeButton>
        </Field>
      </PanelBody>
      <PanelFooter>
        <Action type="submit" $primary>Apply</Action>
        <Action type="button">Exit</Action>
      </PanelFooter>
    </Panel>
  );
}

export default function App() {
  return (
    <Shell>
      <GlobalStyle />
      <TopBar />
      <ToolStrip />
      <Body>
        <Rail>
          <RailButton $active aria-label="Model tree">
            <svg width="40" height="40" viewBox="0 0 40 40" fill="none" stroke="currentColor" strokeWidth="3" strokeLinecap="round" aria-hidden="true">
              <path d="M8 10H8.010M15 10H34M13 20H13.010M20 20H34M18 30H18.010M25 30H34" />
            </svg>
          </RailButton>
          <RailButton aria-label="Code">
            <Outline size={40} weight={2}><path d="M7 8l-4 4l4 4M17 8l4 4l-4 4M14 4l-4 16" /></Outline>
          </RailButton>
        </Rail>
        <Stage>
          <Scene />
          <ModelTree />
          <Column>
            <AxisGizmo />
            <ExtrudePanel />
            <Dock>
              <DockItem $w={224}>
                <svg width="26" height="26" viewBox="0 0 26 26" fill="none" stroke="#8a8f98" strokeWidth="2.200" strokeLinecap="round" aria-hidden="true">
                  <path d="M4 1V25M13 1V25M22 1V25M1 5H25M1 13H25M1 21H25" />
                </svg>
                <span>10</span>
                <span>mm</span>
                <DockEnd>
                  <Outline size={28} weight={2}>
                    <rect x="5" y="11" width="14" height="10" rx="2" />
                    <circle cx="12" cy="16" r="1" />
                    <path d="M8 11v-5a4 4 0 0 1 8 0" />
                  </Outline>
                </DockEnd>
              </DockItem>
              <DockItem aria-label="View options" />
              <DockItem $w={64} $last aria-label="Fit view" />
              <Popover>extrude(23.6)</Popover>
            </Dock>
          </Column>
        </Stage>
      </Body>
    </Shell>
  );
}
